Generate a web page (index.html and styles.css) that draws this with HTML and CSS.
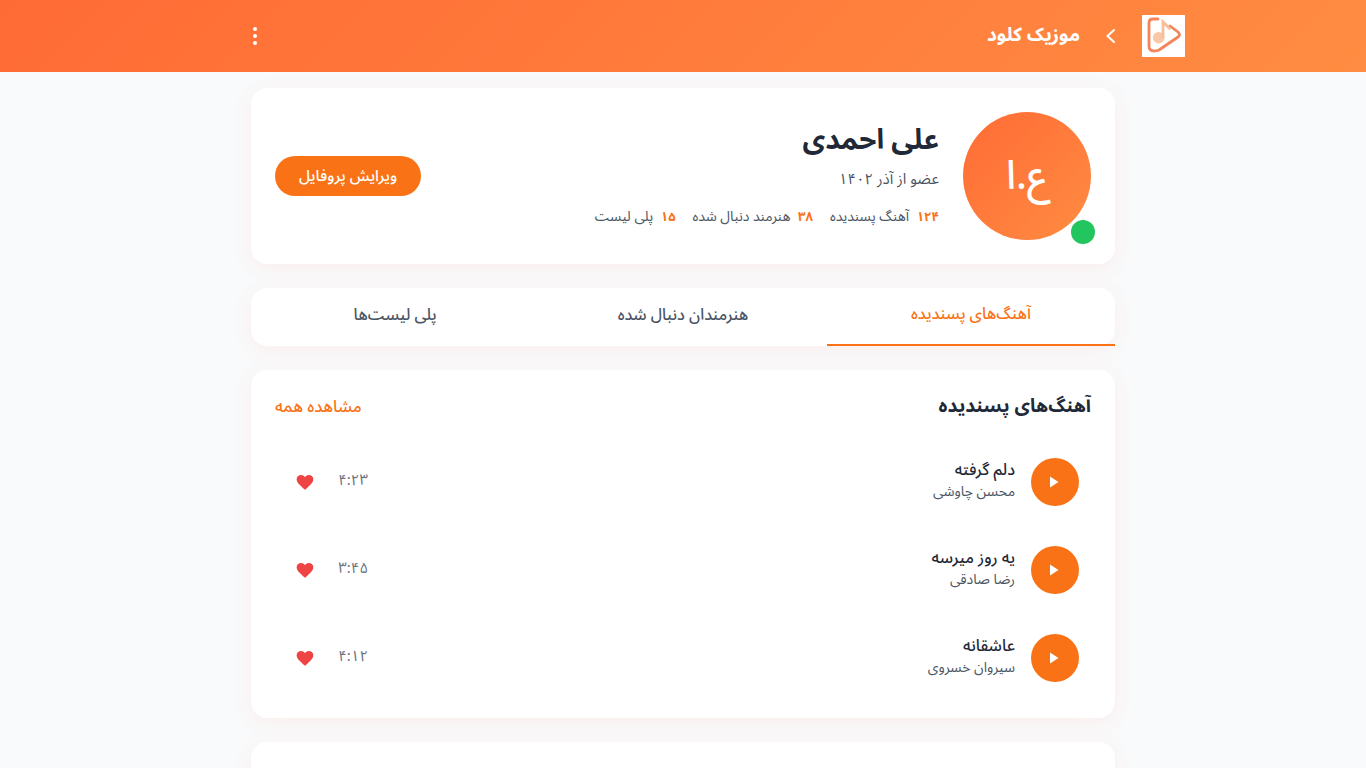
FILE: index.html
```html
<!DOCTYPE html>
<html lang="fa" dir="rtl">
<head>
<meta charset="utf-8">
<title>موزیک کلود</title>
<link rel="stylesheet" href="styles.css">
</head>
<body>
<header class="topbar">
  <div class="brand">
    <svg class="logo" viewBox="0 0 43 42" aria-hidden="true">
      <rect width="43" height="42" fill="#fff"/>
      <path d="M16 4 H11 Q7 4 7 8 V31 Q7 36 12 36 Q15 36 17 35 L36 22 Q39 20 36 17 L28 11" fill="none" stroke="#f4845a" stroke-width="2.800" stroke-linecap="round" stroke-linejoin="round"/>
      <circle cx="16.700" cy="22.700" r="5.800" fill="#fac7a8"/>
      <path d="M21 23 V7 L28.300 14.300" fill="none" stroke="#f9bd98" stroke-width="2.800"/>
    </svg>
    <svg class="chev" viewBox="0 0 12 18" aria-hidden="true"><path d="M9 3 L2.500 9 L9 15" fill="none" stroke="#fff" stroke-width="2" stroke-linecap="round" stroke-linejoin="round"/></svg>
    <span class="brand-name">موزیک کلود</span>
  </div>
  <button class="dots" aria-label="menu"><i></i><i></i><i></i></button>
</header>
<main class="page">
  <section class="card profile">
    <div class="avatar-wrap">
      <div class="avatar">ع.ا</div>
      <span class="online"></span>
    </div>
    <div class="info">
      <h1>علی احمدی</h1>
      <p class="joined">عضو از آذر ۱۴۰۲</p>
      <div class="stats">
        <span><b>۱۲۴</b> آهنگ پسندیده</span>
        <span><b>۳۸</b> هنرمند دنبال شده</span>
        <span><b>۱۵</b> پلی لیست</span>
      </div>
    </div>
    <button class="edit">ویرایش پروفایل</button>
  </section>
  <nav class="card tabs">
    <div class="tab active">آهنگ‌های پسندیده</div>
    <div class="tab">هنرمندان دنبال شده</div>
    <div class="tab">پلی لیست‌ها</div>
  </nav>
  <section class="card songs">
    <div class="songs-head">
      <h2>آهنگ‌های پسندیده</h2>
      <a class="all">مشاهده همه</a>
    </div>
    <div class="song">
      <span class="play"><svg viewBox="0 0 12 12"><path d="M1 0.500 L9.500 6 L1 11.500 Z" fill="#fff"/></svg></span>
      <div class="meta"><div class="title">دلم گرفته</div><div class="artist">محسن چاوشی</div></div>
      <span class="time">۴:۲۳</span>
      <svg class="heart" viewBox="0 0 24 24"><path d="M12 21.400 L10.500 20 C5 15 2 12.300 2 8.700 C2 5.800 4.300 3.600 7.200 3.600 C8.900 3.600 10.900 4.500 12 6 C13.100 4.500 15.100 3.600 16.800 3.600 C19.700 3.600 22 5.800 22 8.700 C22 12.300 19 15 13.500 20 Z" fill="#ef4444"/></svg>
    </div>
    <div class="song">
      <span class="play"><svg viewBox="0 0 12 12"><path d="M1 0.500 L9.500 6 L1 11.500 Z" fill="#fff"/></svg></span>
      <div class="meta"><div class="title">یه روز میرسه</div><div class="artist">رضا صادقی</div></div>
      <span class="time">۳:۴۵</span>
      <svg class="heart" viewBox="0 0 24 24"><path d="M12 21.400 L10.500 20 C5 15 2 12.300 2 8.700 C2 5.800 4.300 3.600 7.200 3.600 C8.900 3.600 10.900 4.500 12 6 C13.100 4.500 15.100 3.600 16.800 3.600 C19.700 3.600 22 5.800 22 8.700 C22 12.300 19 15 13.500 20 Z" fill="#ef4444"/></svg>
    </div>
    <div class="song">
      <span class="play"><svg viewBox="0 0 12 12"><path d="M1 0.500 L9.500 6 L1 11.500 Z" fill="#fff"/></svg></span>
      <div class="meta"><div class="title">عاشقانه</div><div class="artist">سیروان خسروی</div></div>
      <span class="time">۴:۱۲</span>
      <svg class="heart" viewBox="0 0 24 24"><path d="M12 21.400 L10.500 20 C5 15 2 12.300 2 8.700 C2 5.800 4.300 3.600 7.200 3.600 C8.900 3.600 10.900 4.500 12 6 C13.100 4.500 15.100 3.600 16.800 3.600 C19.700 3.600 22 5.800 22 8.700 C22 12.300 19 15 13.500 20 Z" fill="#ef4444"/></svg>
    </div>
  </section>
  <section class="card next"></section>
</main>
</body>
</html>
```
FILE: styles.css
```css
* { box-sizing: border-box; }
html, body { margin: 0; height: 768px; overflow: hidden; }
body {
  background: #f9fafb;
  color: #1f2937;
  font-family: "Noto Sans Arabic", "Vazirmatn", "DejaVu Sans", sans-serif;
}
.topbar {
  height: 72px;
  display: flex;
  align-items: center;
  justify-content: space-between;
  padding: 0 181px 0 247px;
  background: linear-gradient(135deg, #ff6b35, #ff8c42);
}
.brand { display: flex; align-items: center; }
.logo { width: 43px; height: 42px; display: block; }
.chev { width: 12px; height: 18px; margin: 0 25px 0 25px; }
.brand-name { color: #fff; font-size: 19px; font-weight: 700; line-height: 26px; margin-bottom: 2px; }
.dots {
  width: 16px; height: 24px; padding: 0; border: 0; background: none;
  display: flex; flex-direction: column; align-items: center; justify-content: center; gap: 3px;
}
.dots i { width: 4px; height: 4px; border-radius: 50%; background: #fff; }
.page { width: 864px; margin: 16px auto 0; display: flex; flex-direction: column; gap: 24px; }
.card { background: #fff; border-radius: 16px; box-shadow: 0 4px 20px rgba(255, 107, 53, 0.08); }
.profile { height: 176px; padding: 24px; display: flex; align-items: center; }
.avatar-wrap { position: relative; flex: none; }
.avatar {
  width: 128px; height: 128px; border-radius: 50%;
  background: linear-gradient(135deg, #ff6b35, #ff8c42);
  color: #fff; font-size: 40px; font-weight: 500;
  display: flex; align-items: center; justify-content: center;
}
.online { position: absolute; right: -4px; bottom: -4px; width: 24px; height: 24px; border-radius: 50%; background: #22c55e; }
.info { flex: 1; margin-right: 24px; padding-bottom: 4px; }
.info h1 { margin: 0; font-size: 28px; font-weight: 700; line-height: 40px; }
.joined { margin: 8px 0 0; font-size: 15px; line-height: 20px; color: #4b5563; }
.stats { display: flex; gap: 17px; margin-top: 18px; font-size: 14px; line-height: 20px; color: #4b5563; }
.stats b { color: #f97316; font-size: 13px; margin-left: 4px; }
.edit {
  width: 146px; height: 40px; border: 0; border-radius: 20px; background: #f97316;
  color: #fff; font: 500 15.500px "Noto Sans Arabic", "DejaVu Sans", sans-serif;
}
.tabs { height: 58px; display: grid; grid-template-columns: repeat(3, 1fr); }
.tab { display: flex; align-items: center; justify-content: center; font-size: 16px; font-weight: 500; color: #4b5563; height: 58px; padding-bottom: 4px; }
.tab.active { color: #f97316; border-bottom: 2px solid #f97316; }
.songs { height: 348px; padding: 24px; }
.songs-head { display: flex; justify-content: space-between; align-items: center; height: 24px; }
.songs-head h2 { margin: 0; font-size: 19px; font-weight: 700; }
.all { color: #f97316; font-size: 16.500px; font-weight: 500; }
.song { height: 88px; display: flex; align-items: center; padding: 0 12px; }
.songs-head + .song { margin-top: 20px; }
.play { width: 48px; height: 48px; border-radius: 50%; background: #f97316; display: flex; align-items: center; justify-content: center; flex: none; }
.play svg { width: 12px; height: 12px; }
.meta { flex: 1; margin-right: 16px; padding-bottom: 4px; }
.title { font-size: 16px; font-weight: 500; line-height: 24px; }
.artist { font-size: 14px; line-height: 20px; color: #4b5563; }
.time { font-size: 15px; color: #6b7280; width: 29px; margin-left: 24px; padding-bottom: 4px; }
.heart { width: 20px; height: 20px; margin-left: 8px; }
.next { height: 100px; }
```
